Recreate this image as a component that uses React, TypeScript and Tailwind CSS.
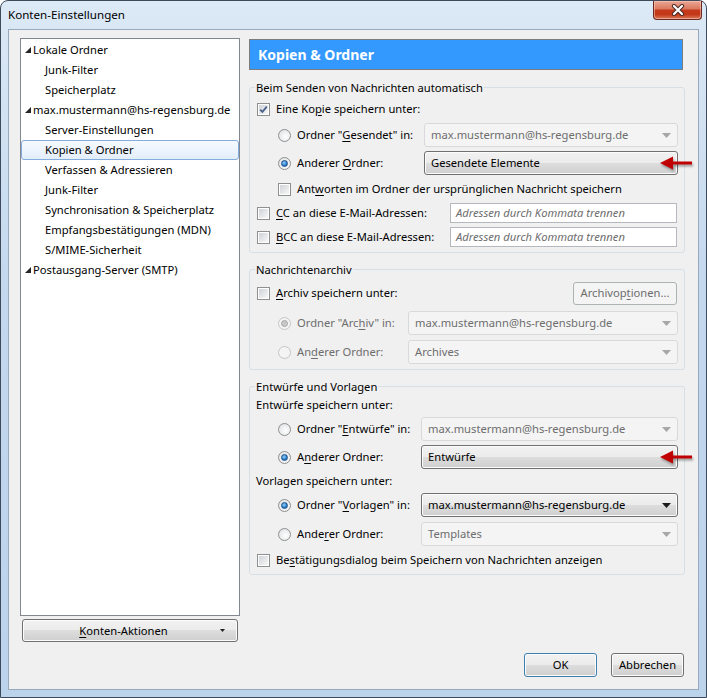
import React from "react";

const btnGrad =
  "bg-[linear-gradient(#f2f2f2_0%,#ebebeb_49%,#dddddd_50%,#cfcfcf_100%)] shadow-[inset_0_0_0_1px_#fcfcfc]";

const Checkbox = ({ checked = false }: { checked?: boolean }) => (
  <span className="flex h-[13px] w-[13px] shrink-0 items-center justify-center border border-[#8e8f8f] bg-[#f4f4f4]">
    <span className="relative flex h-[11px] w-[11px] items-center justify-center border border-white bg-[linear-gradient(135deg,#cfd3d8,#f7f7f7)]">
      {checked && (
        <svg width="11" height="11" viewBox="0 0 11 11" className="absolute -top-[1px] -left-[1px]">
          <path d="M2.2 5.6 L4.4 7.9 L8.8 2.6" fill="none" stroke="#4a5f8a" strokeWidth="1.7" />
        </svg>
      )}
    </span>
  </span>
);

const Radio = ({ checked = false, disabled = false }: { checked?: boolean; disabled?: boolean }) => (
  <span
    className={`flex h-[13px] w-[13px] shrink-0 items-center justify-center rounded-full border ${
      disabled ? "border-[#c5c5c5] bg-[#f4f4f4]" : "border-[#8e8f8f] bg-[radial-gradient(circle_at_60%_60%,#ffffff,#d9dcdf)]"
    }`}
  >
    {checked && (
      <span
        className={`h-[7px] w-[7px] rounded-full ${
          disabled
            ? "border border-[#a8a8a8] bg-[#c8c8c8]"
            : "border border-[#1d4f86] bg-[radial-gradient(circle_at_40%_35%,#8fd0ff,#1e6fc0_70%)]"
        }`}
      />
    )}
  </span>
);

const Caret = ({ dark = false }: { dark?: boolean }) => (
  <svg width="9" height="5" viewBox="0 0 9 5" className="ml-auto shrink-0">
    <path d="M0 0 H9 L4.5 5 Z" fill={dark ? "#1b1b1b" : "#a7a7a7"} />
  </svg>
);

const RedArrow = () => (
  <svg
    width="34"
    height="16"
    viewBox="0 0 34 16"
    className="absolute -right-[17px] top-1/2 -translate-y-1/2 drop-shadow-[1px_2px_1px_rgba(0,0,0,0.35)]"
  >
    <path d="M0 8 L13 1.5 L13 6.6 L32 6.6 L32 9.4 L13 9.4 L13 14.5 Z" fill="#c00000" />
  </svg>
);

type DropProps = { text: string; width: string; enabled?: boolean; arrow?: boolean; darkCaret?: boolean };

const Dropdown = ({ text, width, enabled = false, arrow = false, darkCaret = false }: DropProps) => (
  <div
    className={`relative flex h-[24px] items-center pl-[6px] pr-[6px] ${width} ${
      enabled
        ? `rounded-[3px] border border-[#707070] text-black ${btnGrad}`
        : "rounded-[3px] border border-[#d9d9d9] bg-[#f4f4f4] text-[#6d6d6d]"
    }`}
  >
    <span>{text}</span>
    {!arrow && <Caret dark={darkCaret} />}
    {arrow && <RedArrow />}
  </div>
);

const Group = ({ title, children, className = "" }: { title: string; children: React.ReactNode; className?: string }) => (
  <div className={`flex w-[436px] flex-col rounded-[3px] border border-[#d5dfe5] ${className}`}>
    <span className="-mt-[9px] ml-[5px] self-start bg-[#f0f0f0] px-[1px] leading-[17px]">{title}</span>
    {children}
  </div>
);

const RadioRow = ({
  h,
  label,
  labelW,
  checked,
  disabled,
  children,
}: {
  h: string;
  label: React.ReactNode;
  labelW: string;
  checked?: boolean;
  disabled?: boolean;
  children: React.ReactNode;
}) => (
  <div className={`flex ${h} items-center pl-[28px]`}>
    <Radio checked={checked} disabled={disabled} />
    <span className={`ml-[6px] ${labelW} shrink-0 ${disabled ? "text-[#6d6d6d]" : ""}`}>{label}</span>
    {children}
  </div>
);

const TreeItem = ({ label, top = false, selected = false }: { label: string; top?: boolean; selected?: boolean }) => (
  <div
    className={`flex h-[20px] items-center whitespace-nowrap ${
      selected
        ? "rounded-[3px] border border-[#84acdd] bg-[linear-gradient(#f6faff,#e3eefb)] pl-[23px]"
        : top
        ? "pl-[4px]"
        : "pl-[24px]"
    }`}
  >
    {top && (
      <svg width="6" height="6" viewBox="0 0 6 6" className="mr-[2px] shrink-0">
        <path d="M6 0 V6 H0 Z" fill="#262626" />
      </svg>
    )}
    <span>{label}</span>
  </div>
);

export default function App() {
  return (
    <div className="h-[698px] w-[707px] overflow-hidden bg-white font-['Noto_Sans',sans-serif] text-[11.2px] leading-[16px] text-black">
      <div className="flex h-[698px] w-[707px] flex-col rounded-t-[8px] border border-[#3c4a5c] bg-[linear-gradient(180deg,#dce9f6,#c4d8ee_40%,#bcd3ec)]">
        {/* title bar */}
        <div className="flex h-[28px] items-start">
          <span className="mt-[6px] ml-[7px] text-[11.6px]">Konten-Einstellungen</span>
          <div className="mr-[4px] ml-auto flex h-[19px] w-[49px] items-center justify-center rounded-b-[4px] border border-t-0 border-[#6b2a20] bg-[linear-gradient(#e9a896_0%,#dc7a61_42%,#c5391c_52%,#c23818_75%,#dc7c5e_100%)] shadow-[inset_0_0_0_1px_rgba(255,210,200,0.5)]">
            <svg width="14" height="12" viewBox="0 0 14 12">
              <path d="M3 2 L11 10 M11 2 L3 10" stroke="#4a2a26" strokeWidth="4.2" strokeLinecap="round" />
              <path d="M3 2 L11 10 M11 2 L3 10" stroke="#ffffff" strokeWidth="2.2" strokeLinecap="round" />
            </svg>
          </div>
        </div>

        {/* client area */}
        <div className="mx-[7px] flex h-[661px] flex-col border border-[#98a9bd] bg-[#f0f0f0] pt-[8px] pl-[11px]">
          <div className="flex gap-[9px]">
            {/* left column */}
            <div className="flex w-[220px] flex-col">
              <div className="flex h-[578px] flex-col border border-[#828790] bg-white pt-[1px]">
                <TreeItem top label="Lokale Ordner" />
                <TreeItem label="Junk-Filter" />
                <TreeItem label="Speicherplatz" />
                <TreeItem top label="max.mustermann@hs-regensburg.de" />
                <TreeItem label="Server-Einstellungen" />
                <TreeItem selected label="Kopien & Ordner" />
                <TreeItem label="Verfassen & Adressieren" />
                <TreeItem label="Junk-Filter" />
                <TreeItem label="Synchronisation & Speicherplatz" />
                <TreeItem label="Empfangsbestätigungen (MDN)" />
                <TreeItem label="S/MIME-Sicherheit" />
                <TreeItem top label="Postausgang-Server (SMTP)" />
              </div>
              <div
                className={`mt-[3px] ml-[2px] flex h-[23px] w-[216px] items-center rounded-[3px] border border-[#707070] ${btnGrad}`}
              >
                <span className="flex-1 pl-[4px] text-center">
                  <u className="underline-offset-2">K</u>onten-Aktionen
                </span>
                <svg width="5" height="3" viewBox="0 0 5 3" className="mr-[12px]">
                  <path d="M0 0 H5 L2.5 3 Z" fill="#222" />
                </svg>
              </div>
            </div>

            {/* right column */}
            <div className="flex w-[436px] flex-col">
              <div className="mt-[1px] flex h-[31px] w-[434px] items-center border border-[#7d7d7d] bg-[#3399ff] pl-[8px] text-[14px] font-bold text-white">
                Kopien &amp; Ordner
              </div>

              <Group title="Beim Senden von Nachrichten automatisch" className="mt-[17px] pb-[4px]">
                <div className="flex h-[26px] items-center pl-[7px]">
                  <Checkbox checked />
                  <span className="ml-[6px]">
                    Eine Ko<u className="underline-offset-2">p</u>ie speichern unter:
                  </span>
                </div>
                <RadioRow
                  h="h-[26px]"
                  labelW="w-[127px]"
                  label={
                    <>
                      Ordner "<u className="underline-offset-2">G</u>esendet" in:
                    </>
                  }
                >
                  <Dropdown width="w-[254px]" text="max.mustermann@hs-regensburg.de" />
                </RadioRow>
                <RadioRow
                  h="h-[30px]"
                  labelW="w-[127px]"
                  checked
                  label={
                    <>
                      Anderer <u className="underline-offset-2">O</u>rdner:
                    </>
                  }
                >
                  <Dropdown width="w-[254px]" text="Gesendete Elemente" enabled arrow />
                </RadioRow>
                <div className="flex h-[22px] items-center pl-[28px]">
                  <Checkbox />
                  <span className="ml-[6px]">
                    Ant<u className="underline-offset-2">w</u>orten im Ordner der ursprünglichen Nachricht speichern
                  </span>
                </div>
                <div className="flex h-[26px] items-center pl-[7px]">
                  <Checkbox />
                  <span className="ml-[6px] w-[174px] shrink-0">
                    <u className="underline-offset-2">C</u>C an diese E-Mail-Adressen:
                  </span>
                  <div className="flex h-[20px] w-[227px] items-center border border-[#b5b9bf] bg-white pl-[5px] text-[#6d6d6d] italic">
                    Adressen durch Kommata trennen
                  </div>
                </div>
                <div className="flex h-[22px] items-center pl-[7px]">
                  <Checkbox />
                  <span className="ml-[6px] w-[174px] shrink-0">
                    <u className="underline-offset-2">B</u>CC an diese E-Mail-Adressen:
                  </span>
                  <div className="flex h-[20px] w-[227px] items-center border border-[#b5b9bf] bg-white pl-[5px] text-[#6d6d6d] italic">
                    Adressen durch Kommata trennen
                  </div>
                </div>
              </Group>

              <Group title="Nachrichtenarchiv" className="mt-[16px] pb-[3px]">
                <div className="flex h-[30px] items-center pr-[7px] pl-[7px]">
                  <Checkbox />
                  <span className="ml-[6px]">
                    <u className="underline-offset-2">A</u>rchiv speichern unter:
                  </span>
                  <div className="ml-auto flex h-[23px] w-[104px] items-center justify-center rounded-[3px] border border-[#adb2b5] bg-[#f4f4f4] text-[#6d6d6d]">
                    Archivop<u className="underline-offset-2">t</u>ionen...
                  </div>
                </div>
                <RadioRow
                  h="h-[30px]"
                  labelW="w-[111px]"
                  checked
                  disabled
                  label={
                    <>
                      Ordner "Arc<u className="underline-offset-2">h</u>iv" in:
                    </>
                  }
                >
                  <Dropdown width="w-[270px]" text="max.mustermann@hs-regensburg.de" />
                </RadioRow>
                <RadioRow
                  h="h-[28px]"
                  labelW="w-[111px]"
                  disabled
                  label={
                    <>
                      An<u className="underline-offset-2">d</u>erer Ordner:
                    </>
                  }
                >
                  <Dropdown width="w-[270px]" text="Archives" />
                </RadioRow>
              </Group>

              <Group title="Entwürfe und Vorlagen" className="mt-[16px] pb-[3px]">
                <div className="flex h-[20px] items-center pl-[6px]">Entwürfe speichern unter:</div>
                <RadioRow
                  h="h-[28px]"
                  labelW="w-[124px]"
                  label={
                    <>
                      Ordner "<u className="underline-offset-2">E</u>ntwürfe" in:
                    </>
                  }
                >
                  <Dropdown width="w-[257px]" text="max.mustermann@hs-regensburg.de" />
                </RadioRow>
                <RadioRow
                  h="h-[28px]"
                  labelW="w-[124px]"
                  checked
                  label={
                    <>
                      A<u className="underline-offset-2">n</u>derer Ordner:
                    </>
                  }
                >
                  <Dropdown width="w-[257px]" text="Entwürfe" enabled arrow />
                </RadioRow>
                <div className="flex h-[20px] items-center pl-[6px]">Vorlagen speichern unter:</div>
                <RadioRow
                  h="h-[28px]"
                  labelW="w-[124px]"
                  checked
                  label={
                    <>
                      Ordner "<u className="underline-offset-2">V</u>orlagen" in:
                    </>
                  }
                >
                  <Dropdown width="w-[257px]" text="max.mustermann@hs-regensburg.de" enabled darkCaret />
                </RadioRow>
                <RadioRow
                  h="h-[30px]"
                  labelW="w-[124px]"
                  label={
                    <>
                      Ande<u className="underline-offset-2">r</u>er Ordner:
                    </>
                  }
                >
                  <Dropdown width="w-[257px]" text="Templates" />
                </RadioRow>
                <div className="flex h-[22px] items-center pl-[7px]">
                  <Checkbox />
                  <span className="ml-[6px]">
                    Be<u className="underline-offset-2">s</u>tätigungsdialog beim Speichern von Nachrichten anzeigen
                  </span>
                </div>
              </Group>
            </div>
          </div>

          {/* dialog buttons */}
          <div className="mt-[11px] flex justify-end gap-[14px] pr-[14px]">
            <div
              className={`flex h-[24px] w-[73px] items-center justify-center rounded-[3px] border border-[#3c7fb1] ${btnGrad} shadow-[inset_0_0_0_1px_#9fd6f5]`}
            >
              OK
            </div>
            <div className={`flex h-[24px] w-[73px] items-center justify-center rounded-[3px] border border-[#707070] ${btnGrad}`}>
              Abbrechen
            </div>
          </div>
        </div>
      </div>
    </div>
  );
}
